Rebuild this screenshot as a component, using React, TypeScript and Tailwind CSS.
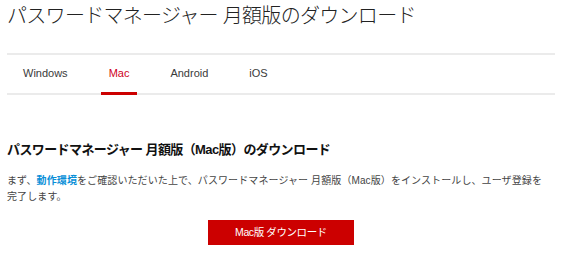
import { useState } from 'react'

const tabs = ['Windows', 'Mac', 'Android', 'iOS']

export default function App() {
  const [active, setActive] = useState('Mac')

  return (
    <main
      className="w-[562px] h-[263px] bg-white px-[7px] text-[#333]"
      style={{ fontFamily: '"Liberation Sans", "Noto Sans CJK JP", sans-serif' }}
    >
      <h1 className="text-[20px] leading-[32px] font-light tracking-[-0.7px] text-[#222]">
        パスワードマネージャー 月額版のダウンロード
      </h1>

      <nav className="mt-[21px] border-t-2 border-b-2 border-[#ebebeb]">
        <ul className="flex gap-[25px] pl-[8px] -mb-[2px]">
          {tabs.map((t) => (
            <li key={t}>
              <button
                type="button"
                onClick={() => setActive(t)}
                className={`block px-2 pt-[11px] pb-[12px] text-[11px] leading-[14px] border-b-[3px] ${
                  active === t
                    ? 'text-[#d0021b] border-[#cc0000]'
                    : 'text-[#3a3a3a] border-transparent'
                }`}
              >
                {t}
              </button>
            </li>
          ))}
        </ul>
      </nav>

      <section className="mt-[45px]">
        <h2 className="text-[13px] leading-[20px] font-bold tracking-[-0.6px] text-[#111]">
          パスワードマネージャー 月額版（Mac版）のダウンロード
        </h2>
        <p className="mt-[13px] text-[10px] leading-[16px] tracking-[0.1px] text-[#444]">
          まず、
          <a href="#" className="font-bold text-[#0a8fd8]">
            動作環境
          </a>
          をご確認いただいた上で、パスワードマネージャー 月額版（Mac版）をインストールし、ユーザ登録を
          <br />
          完了します。
        </p>
        <div className="mt-[15px] flex justify-center">
          <button
            type="button"
            className="w-[146px] h-[25px] bg-[#cc0000] text-white text-[10.5px] tracking-[-0.4px]"
          >
            Mac版 ダウンロード
          </button>
        </div>
      </section>
    </main>
  )
}
